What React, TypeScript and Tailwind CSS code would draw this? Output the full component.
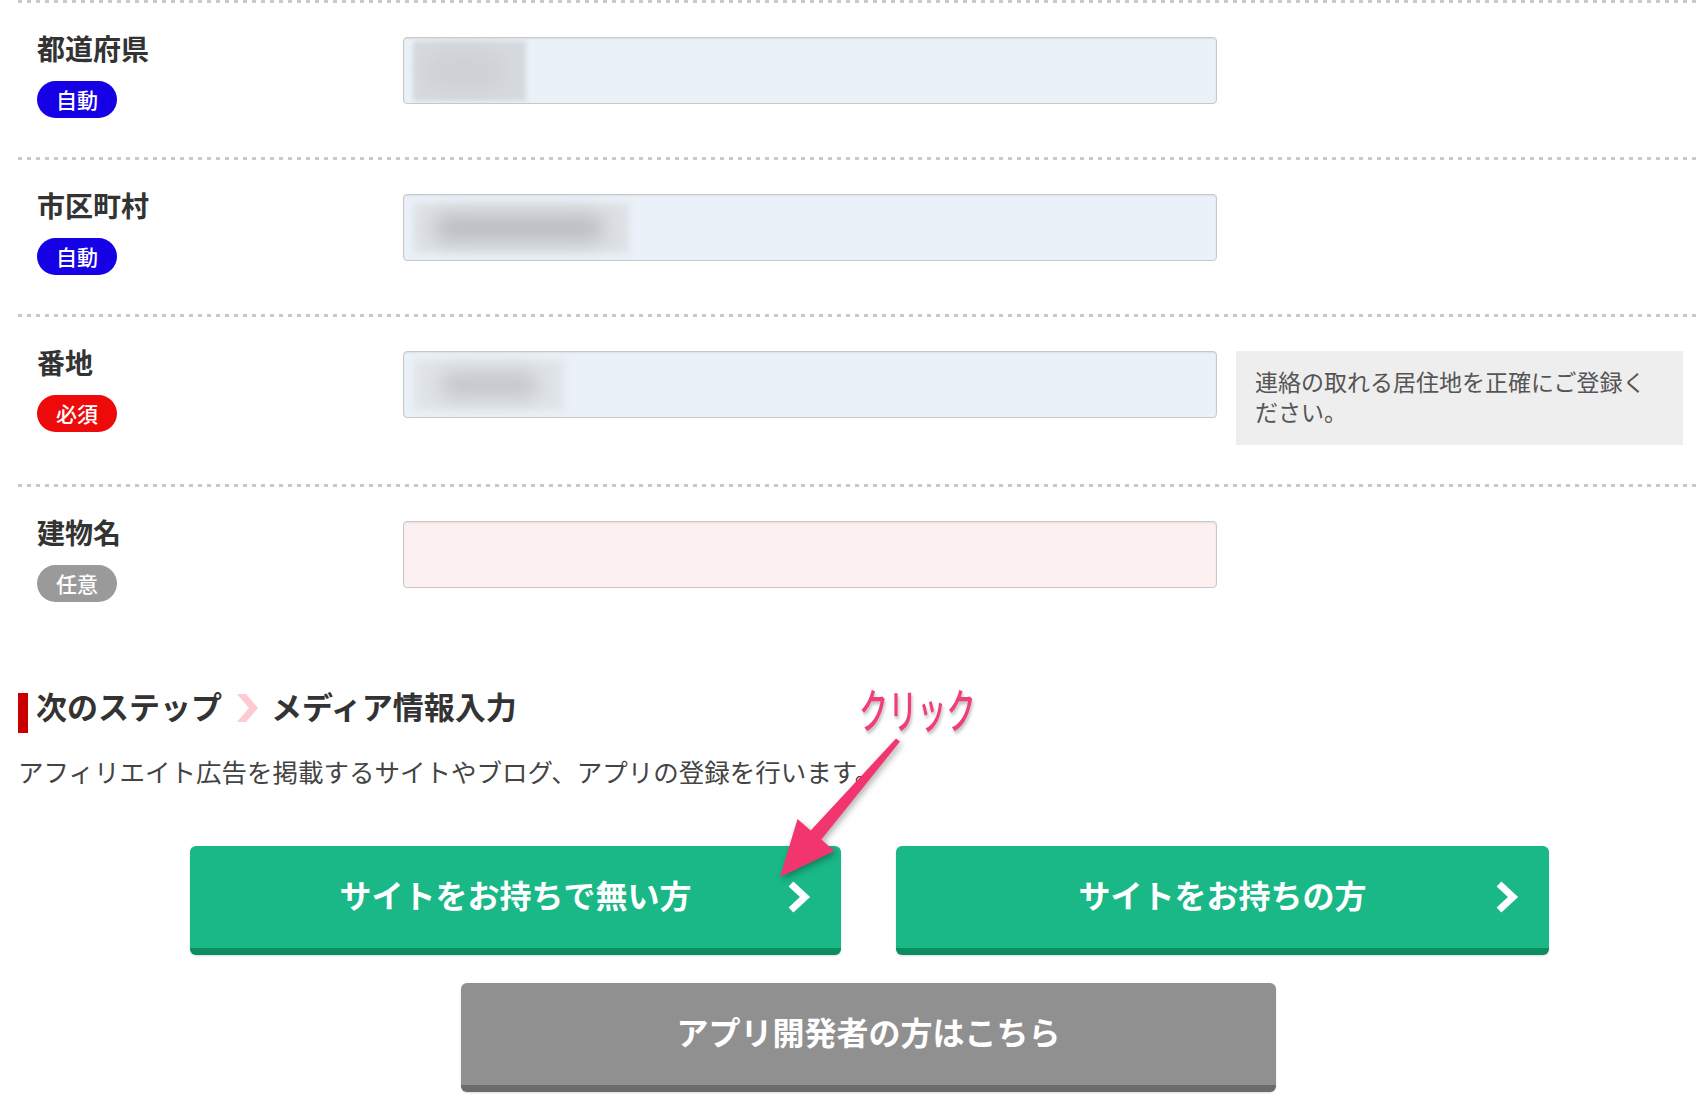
import React from "react";

type BadgeKind = "auto" | "required" | "optional";

function Dots() {
  return (
    <div className="h-[3px] w-full bg-[repeating-linear-gradient(to_right,#c9c9c9_0px,#c9c9c9_4px,transparent_4px,transparent_9px)]" />
  );
}

function Badge({ kind }: { kind: BadgeKind }) {
  const map = {
    auto: { text: "自動", cls: "bg-[#1600e6]" },
    required: { text: "必須", cls: "bg-[#ee0a0a]" },
    optional: { text: "任意", cls: "bg-[#9a9a9a]" },
  } as const;
  const b = map[kind];
  return (
    <div
      className={`mt-[22px] flex h-[37px] w-[80px] items-center justify-center rounded-full text-[21px] font-medium leading-none text-white ${b.cls}`}
    >
      {b.text}
    </div>
  );
}

function BlurContent({ variant }: { variant: number }) {
  if (variant === 1) {
    return (
      <>
        <div className="absolute left-[9px] top-[3px] h-[60px] w-[113px] bg-[#d6dadf] blur-[2px]" />
        <div className="absolute left-[20px] top-[12px] h-[40px] w-[80px] rounded-full bg-[#cdd1d5] blur-[10px]" />
      </>
    );
  }
  if (variant === 2) {
    return (
      <>
        <div className="absolute left-[10px] top-[8px] h-[50px] w-[215px] bg-[#dde1e5] blur-[4px]" />
        <div className="absolute left-[30px] top-[20px] h-[26px] w-[170px] rounded-full bg-[#b8bcc0] blur-[10px]" />
      </>
    );
  }
  if (variant === 3) {
    return (
      <>
        <div className="absolute left-[10px] top-[8px] h-[50px] w-[150px] bg-[#e0e4e8] blur-[4px]" />
        <div className="absolute left-[35px] top-[20px] h-[26px] w-[100px] rounded-full bg-[#c2c6ca] blur-[10px]" />
      </>
    );
  }
  return null;
}

function Row({
  label,
  badge,
  pink,
  blur,
  note,
  dots = true,
}: {
  label: string;
  badge: BadgeKind;
  pink?: boolean;
  blur?: number;
  note?: boolean;
  dots?: boolean;
}) {
  return (
    <div>
      {dots && <Dots />}
      <div className="flex pb-[39px] pt-[34px]">
        <div className="w-[385px] pl-[19px]">
          <div className="text-[28px] font-bold leading-[22px] text-[#333]">{label}</div>
          <Badge kind={badge} />
        </div>
        <div
          className={`relative h-[67px] w-[814px] overflow-hidden rounded-[4px] border border-[#c8c8c8] shadow-[inset_0_1px_2px_rgba(0,0,0,0.08)] ${
            pink ? "bg-[#fdf0f0]" : "bg-[#ebf1f8]"
          }`}
        >
          {blur ? <BlurContent variant={blur} /> : null}
        </div>
        {note && (
          <div className="ml-[19px] h-[94px] w-[447px] bg-[#eeeeee] pl-[19px] pr-[30px] pt-[15px] text-[23px] leading-[30px] text-[#555]">
            連絡の取れる居住地を正確にご登録ください。
          </div>
        )}
      </div>
    </div>
  );
}

function Chevron() {
  return (
    <svg width="30" height="36" viewBox="0 0 30 36" className="absolute right-[27px] top-1/2 -translate-y-1/2">
      <polyline points="7,5 21,18 7,31" fill="none" stroke="white" strokeWidth="7" strokeLinejoin="miter" strokeLinecap="butt" />
    </svg>
  );
}

function GreenButton({ text, width }: { text: string; width: string }) {
  return (
    <div
      className={`relative flex h-[109px] items-center justify-center rounded-[6px] border-b-[7px] border-[#0b8d5f] bg-[#19b886] text-[32px] font-bold text-white shadow-[0_1px_2px_rgba(0,0,0,0.15)] ${width}`}
    >
      <span className="-mt-[6px]">{text}</span>
      <Chevron />
    </div>
  );
}

export default function App() {
  return (
    <div className="relative h-[1100px] w-[1696px] overflow-hidden bg-white font-['Noto_Sans_CJK_JP',sans-serif]">
      <div className="pl-[18px]">
        <div className="w-[1702px]">
          <Row label="都道府県" badge="auto" blur={1} />
          <Row label="市区町村" badge="auto" blur={2} />
          <Row label="番地" badge="required" blur={3} note />
          <Row label="建物名" badge="optional" pink />

          <div className="mt-[52px] flex items-start">
            <div className="h-[40px] w-[10px] bg-[#c80000]" />
            <div className="-mt-[6px] ml-[8px] flex items-center text-[31px] font-bold leading-[34px] text-[#333]">
              <span>次のステップ</span>
              <svg width="27" height="34" viewBox="0 0 27 34" className="ml-[12px] mr-[10px] mt-[4px]">
                <polygon points="3,3 12,3 24,17 12,31 3,31 15,17" fill="#ffc9d2" />
              </svg>
              <span>メディア情報入力</span>
            </div>
          </div>

          <div className="mt-[23px] text-[25.5px] leading-[30px] text-[#444]">
            アフィリエイト広告を掲載するサイトやブログ、アプリの登録を行います。
          </div>

          <div className="ml-[172px] mt-[60px] flex gap-[55px]">
            <GreenButton text="サイトをお持ちで無い方" width="w-[651px]" />
            <GreenButton text="サイトをお持ちの方" width="w-[653px]" />
          </div>

          <div className="ml-[443px] mt-[28px] flex h-[109px] w-[815px] items-center justify-center rounded-[6px] border-b-[7px] border-[#6b6b6b] bg-[#909090] text-[32px] font-bold text-white shadow-[0_1px_2px_rgba(0,0,0,0.15)]">
            <span className="-mt-[6px]">アプリ開発者の方はこちら</span>
          </div>
        </div>
      </div>

      {/* annotation */}
      <div className="absolute left-[859px] top-[684px] origin-left scale-x-[0.62] text-[47px] font-medium leading-none text-[#ef3f7b] [text-shadow:2px_3px_4px_rgba(0,0,0,0.25)]">
        クリック
      </div>
      <svg
        className="pointer-events-none absolute left-0 top-0"
        width="1696"
        height="1100"
        viewBox="0 0 1696 1100"
        style={{ filter: "drop-shadow(2px 3px 3px rgba(0,0,0,0.3))" }}
      >
        <polygon
          points="900,741.5 821.3,839.6 834.5,851 780,877 797.5,819 810.7,830.4 896,738.5"
          fill="#f3356f"
        />
      </svg>
    </div>
  );
}
